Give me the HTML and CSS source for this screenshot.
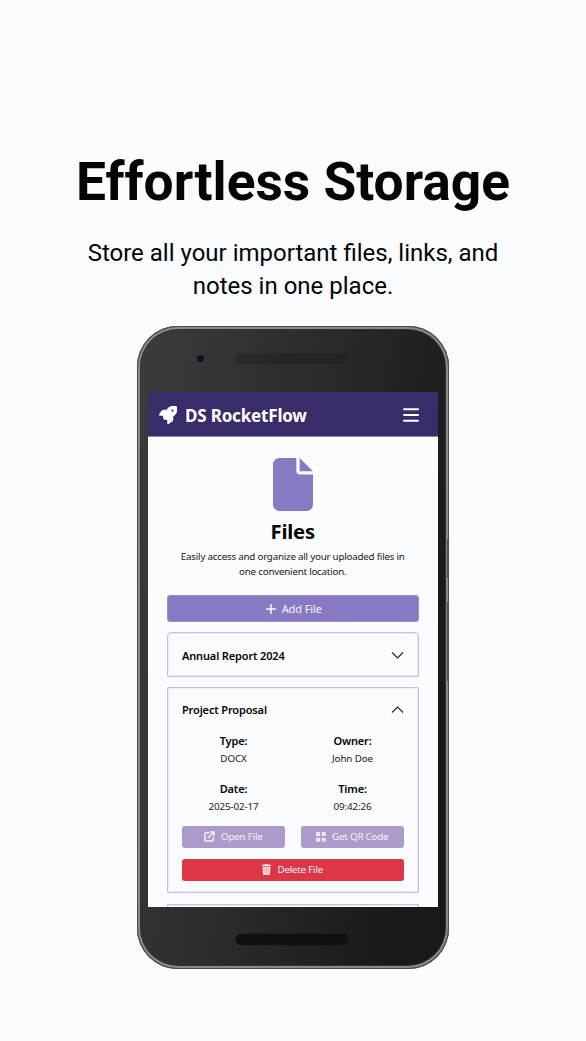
FILE: index.html
```html
<!DOCTYPE html>
<html lang="en">
<head>
<meta charset="utf-8">
<title>DS RocketFlow</title>
<link rel="stylesheet" href="styles.css">
</head>
<body>
<main class="promo">
  <h1 class="headline">Effortless Storage</h1>
  <p class="tagline">Store all your important files, links, and<br>notes in one place.</p>
  <div class="phone">
    <i class="side-key power"></i><i class="side-key volume"></i>
    <div class="bezel-top"><i class="camera"></i><i class="earpiece"></i></div>
    <div class="screen">
      <header class="navbar">
        <svg class="rocket" viewBox="0 0 512 512"><path fill="#fff" fill-rule="evenodd" d="M128 384L113 277H24c-9 0-17-5-21-12s-4-17 0-24l53-88c17-29 48-46 81-46h80l9-14C308-28 429-9 483 3c14 3 23 13 26 26 12 54 31 175-90 257l-14 9v80c0 33-18 64-46 81l-88 53c-8 4-17 4-25 0s-12-13-12-21V398zM384 96a32 32 0 1 0 0 64 32 32 0 1 0 0-64z"/></svg>
        <span class="brand">DS RocketFlow</span>
        <svg class="menu" viewBox="0 0 16 14"><path d="M1 1.2h14M1 7h14M1 12.8h14" stroke="#fff" stroke-width="2" stroke-linecap="round"/></svg>
      </header>
      <section class="content">
        <svg class="file-icon" viewBox="0 0 384 512" preserveAspectRatio="none"><path fill="#8879c2" d="M0 64C0 29 29 0 64 0h160v128c0 18 14 32 32 32h128v288c0 35-29 64-64 64H64c-35 0-64-29-64-64zM384 128H256V0z"/></svg>
        <h2 class="title">Files</h2>
        <p class="description">Easily access and organize all your uploaded files in<br>one convenient location.</p>
        <div class="button add"><svg class="icon-plus" viewBox="0 0 10 10"><path d="M5 .8v8.4M.8 5h8.4" stroke="#fff" stroke-width="1.5" stroke-linecap="round"/></svg><span class="add-label">Add File</span></div>
        <article class="card first">
          <div class="card-head"><span class="name-report">Annual Report 2024</span><svg class="chevron" viewBox="0 0 12 7"><path d="M.5.5 6 6 11.5.5" fill="none" stroke="#222" stroke-width="1.1"/></svg></div>
        </article>
        <article class="card open">
          <div class="card-head"><span class="name-proposal">Project Proposal</span><svg class="chevron" viewBox="0 0 12 7"><path d="M.5 6.5 6 1l5.5 5.5" fill="none" stroke="#222" stroke-width="1.1"/></svg></div>
          <dl class="details">
            <div><dt>Type:</dt><dd>DOCX</dd></div>
            <div><dt>Owner:</dt><dd>John Doe</dd></div>
            <div><dt>Date:</dt><dd>2025-02-17</dd></div>
            <div><dt>Time:</dt><dd>09:42:26</dd></div>
          </dl>
          <div class="actions">
            <div class="button soft"><svg class="icon-open" viewBox="0 0 12 12"><path d="M5 2H2.2Q1 2 1 3.200V9.800Q1 11 2.200 11H8.800Q10 11 10 9.800V7M7 1h4v4M10.700 1.300 4.800 7.200" fill="none" stroke="#f3eff8" stroke-width="1.600" stroke-linecap="round" stroke-linejoin="round"/></svg><span>Open File</span></div>
            <div class="button soft qr"><svg class="icon-qr" viewBox="0 0 10 10"><path d="M.8.8h2.500v2.500H.8zM6.500.8H9v2.500H6.500zM.8 6.500h2.500V9H.8z" fill="none" stroke="#f3eff8" stroke-width="1.600" stroke-linejoin="round"/><path d="M5.700 5.700h2v1h2v2.200h-2v-.8h-.7v1.700H5.700zM9 9h.9v.9H9zM7.300 9.100h.9v.8h-.9zM9 5.700h.9v.7H9z" fill="#f3eff8"/></svg><span>Get QR Code</span></div>
          </div>
          <div class="button delete"><svg class="icon-trash" viewBox="0 0 9 11"><path d="M3 0h3l.5.700H9V2H0V.7h2.500zM.6 2.700h7.800L8 10q-.1 1-1 1H2q-.9 0-1-1z" fill="#fbe1e4"/><path d="M2.800 4v5.500M4.500 4v5.500M6.200 4v5.500" stroke="#dd5767" stroke-width=".4"/></svg><span>Delete File</span></div>
        </article>
        <article class="card next"></article>
      </section>
    </div>
    <div class="bezel-bottom"><i class="speaker"></i></div>
  </div>
</main>
</body>
</html>
```
FILE: styles.css
```css
* { box-sizing: border-box; margin: 0; padding: 0; }
body { background: #f9fbfd; color: #050505; font-family: Roboto, sans-serif; }
svg { display: block; flex: none; }
.promo { height: 1041px; padding-top: 150px; display: flex; flex-direction: column; align-items: center; overflow: hidden; }
.headline { height: 64px; font-size: 53.3px; line-height: 64px; font-weight: 700; white-space: nowrap; }
.tagline { margin-top: 23px; height: 89px; font-size: 24px; line-height: 33px; text-align: center; white-space: nowrap; }
.phone { position: relative; width: 312px; height: 643px; padding: 0 11px; border-radius: 41px; background: linear-gradient(100deg, #3c3c3c, #292929 50%, #191919 85%); box-shadow: inset 0 0 0 1px #494949, inset 0 0 0 3px #8a8a8a, inset 0 0 0 4px #303030; font-family: "Noto Sans", sans-serif; }
.side-key { position: absolute; right: 0; width: 2px; background: #505050; }
.power { top: 213px; height: 39px; }
.volume { top: 276px; height: 79px; }
.bezel-top { height: 66px; display: flex; padding: 27px 0 0 49px; }
.camera { width: 7px; height: 7px; margin-top: 2px; border-radius: 50%; background: #141126; box-shadow: 0 0 2px #242424; }
.earpiece { width: 112px; height: 10px; margin: 1px 0 0 32px; border-radius: 5px; background: linear-gradient(90deg, #292929, #222222); box-shadow: 0 0 2px #282828; }
.screen { height: 515px; overflow: hidden; background: #f9fbfd; }
.navbar { height: 44px; padding: 2px 19px 0 11px; display: flex; align-items: center; background: #392c69; box-shadow: 0 1px #8b84a9; color: #fff; }
.rocket { width: 18px; height: 18px; }
.brand { margin-left: 8px; font-size: 17px; font-weight: 700; letter-spacing: -.18px; white-space: nowrap; }
.menu { width: 16px; height: 14px; margin: -1px 0 0 auto; }
.content { padding: 22px 19.5px 0 19px; }
.file-icon { width: 40px; height: 53px; margin: 0 0 0 106px; }
.title { height: 30px; margin-top: 5px; font-size: 20.2px; line-height: 30px; letter-spacing: -.2px; text-align: center; }
.description { height: 45px; margin-top: 3px; font-size: 9.8px; line-height: 15px; letter-spacing: -.23px; text-align: center; white-space: nowrap; color: #202020; }
.button { display: flex; align-items: center; justify-content: center; gap: 6px; border-radius: 3px; color: #f6f2fa; font-size: 9.8px; letter-spacing: -.22px; white-space: nowrap; }
.add { height: 27px; margin-top: 1px; background: #8879c2; border: 1px solid #9a8dcc; font-size: 11px; letter-spacing: -.1px; padding-left: 2px; }
.icon-plus { width: 10px; height: 10px; }
.card { border: 1px solid #c5bfe4; box-shadow: inset 0 0 0 .5px #dcd8ef; padding: 0 14px; }
.first { height: 45px; margin-top: 10px; border-radius: 4px 4px 1px 1px; }
.open { height: 206px; margin-top: 10px; border-radius: 1px; }
.next { height: 45px; margin-top: 11px; }
.card-head { height: 44px; display: flex; justify-content: space-between; align-items: center; font-size: 11px; font-weight: 600; letter-spacing: -.15px; white-space: nowrap; }
.chevron { width: 13px; height: 7px; }
.open .card-head { height: 43px; }
.details { display: grid; grid-template-columns: 103px 103px; column-gap: 16px; grid-template-rows: 47.5px 47px; text-align: center; }
.details dt { height: 19px; font-size: 11px; line-height: 19px; font-weight: 600; letter-spacing: -.15px; }
.details dd { height: 18px; font-size: 9.8px; line-height: 18px; letter-spacing: -.12px; color: #202020; }
.actions { display: grid; grid-template-columns: 102.5px 102.5px; column-gap: 16.5px; }
.soft { height: 22px; background: #ac9bca; }
.icon-open { width: 11px; height: 11px; }
.icon-qr { width: 10px; height: 10px; }
.delete { height: 22px; margin-top: 11px; background: #dc3647; }
.icon-trash { width: 9px; height: 11px; }
.bezel-bottom { height: 62px; padding-top: 27px; }
.speaker { display: block; width: 112px; height: 11px; margin-left: 88px; border-radius: 5px; background: #101010; box-shadow: 0 0 2px #181818; }
```
